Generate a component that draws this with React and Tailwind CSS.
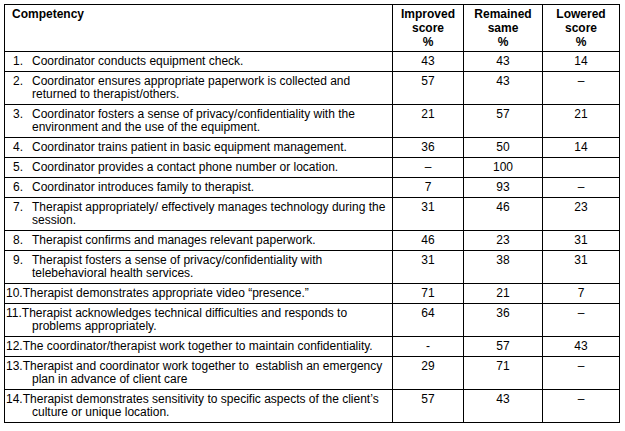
import React from 'react'

const rows = [
  { n: 1, lines: ['Coordinator conducts equipment check.'], a: '43', b: '43', c: '14' },
  { n: 2, lines: ['Coordinator ensures appropriate paperwork is collected and', 'returned to therapist/others.'], a: '57', b: '43', c: '–' },
  { n: 3, lines: ['Coordinator fosters a sense of privacy/confidentiality with the', 'environment and the use of the equipment.'], a: '21', b: '57', c: '21' },
  { n: 4, lines: ['Coordinator trains patient in basic equipment management.'], a: '36', b: '50', c: '14' },
  { n: 5, lines: ['Coordinator provides a contact phone number or location.'], a: '–', b: '100', c: '' },
  { n: 6, lines: ['Coordinator introduces family to therapist.'], a: '7', b: '93', c: '–' },
  { n: 7, lines: ['Therapist appropriately/ effectively manages technology during the', 'session.'], a: '31', b: '46', c: '23' },
  { n: 8, lines: ['Therapist confirms and manages relevant paperwork.'], a: '46', b: '23', c: '31' },
  { n: 9, lines: ['Therapist fosters a sense of privacy/confidentiality with', 'telebehavioral health services.'], a: '31', b: '38', c: '31' },
  { n: 10, lines: ['Therapist demonstrates appropriate video “presence.”'], a: '71', b: '21', c: '7' },
  { n: 11, lines: ['Therapist acknowledges technical difficulties and responds to', 'problems appropriately.'], a: '64', b: '36', c: '–' },
  { n: 12, lines: ['The coordinator/therapist work together to maintain confidentiality.'], a: '-', b: '57', c: '43' },
  { n: 13, lines: ['Therapist and coordinator work together to\u00a0 establish an emergency', 'plan in advance of client care'], a: '29', b: '71', c: '–' },
  { n: 14, lines: ['Therapist demonstrates sensitivity to specific aspects of the client’s', 'culture or unique location.'], a: '57', b: '43', c: '–' },
]

const Num = ({ v }) => (
  <td className="border border-black py-[3px] text-center align-top whitespace-nowrap">{v}</td>
)

const App = () => {
  return (
    <div className="min-h-[431px] bg-white pl-[4px] pt-[4px] font-['Liberation_Sans',Arial,sans-serif] text-[12px] leading-[13px] text-black">
      <table className="w-[616px] table-fixed border-collapse">
        <colgroup>
          <col className="w-[388px]" />
          <col className="w-[71px]" />
          <col className="w-[79px]" />
          <col className="w-[77px]" />
        </colgroup>
        <thead>
          <tr className="font-bold leading-[14px]">
            <th className="border border-black py-[2px] pl-[7px] text-left align-top">Competency</th>
            <th className="border border-black py-[2px] text-center align-top">Improved<br />score<br />%</th>
            <th className="border border-black py-[2px] text-center align-top">Remained<br />same<br />%</th>
            <th className="border border-black py-[2px] text-center align-top">Lowered<br />score<br />%</th>
          </tr>
        </thead>
        <tbody>
          {rows.map((r) => (
            <tr key={r.n}>
              <td className="border border-black py-[3px] pl-[27px] align-top whitespace-nowrap">
                {r.n < 10 ? (
                  <span className="-ml-[19px] inline-block w-[19px]">{r.n}.</span>
                ) : (
                  <span className="-ml-[26px] inline-block">{r.n}.</span>
                )}
                {r.lines.map((l, i) => (
                  <React.Fragment key={i}>
                    {i > 0 && <br />}
                    {l}
                  </React.Fragment>
                ))}
              </td>
              <Num v={r.a} />
              <Num v={r.b} />
              <Num v={r.c} />
            </tr>
          ))}
        </tbody>
      </table>
    </div>
  )
}

export default App
